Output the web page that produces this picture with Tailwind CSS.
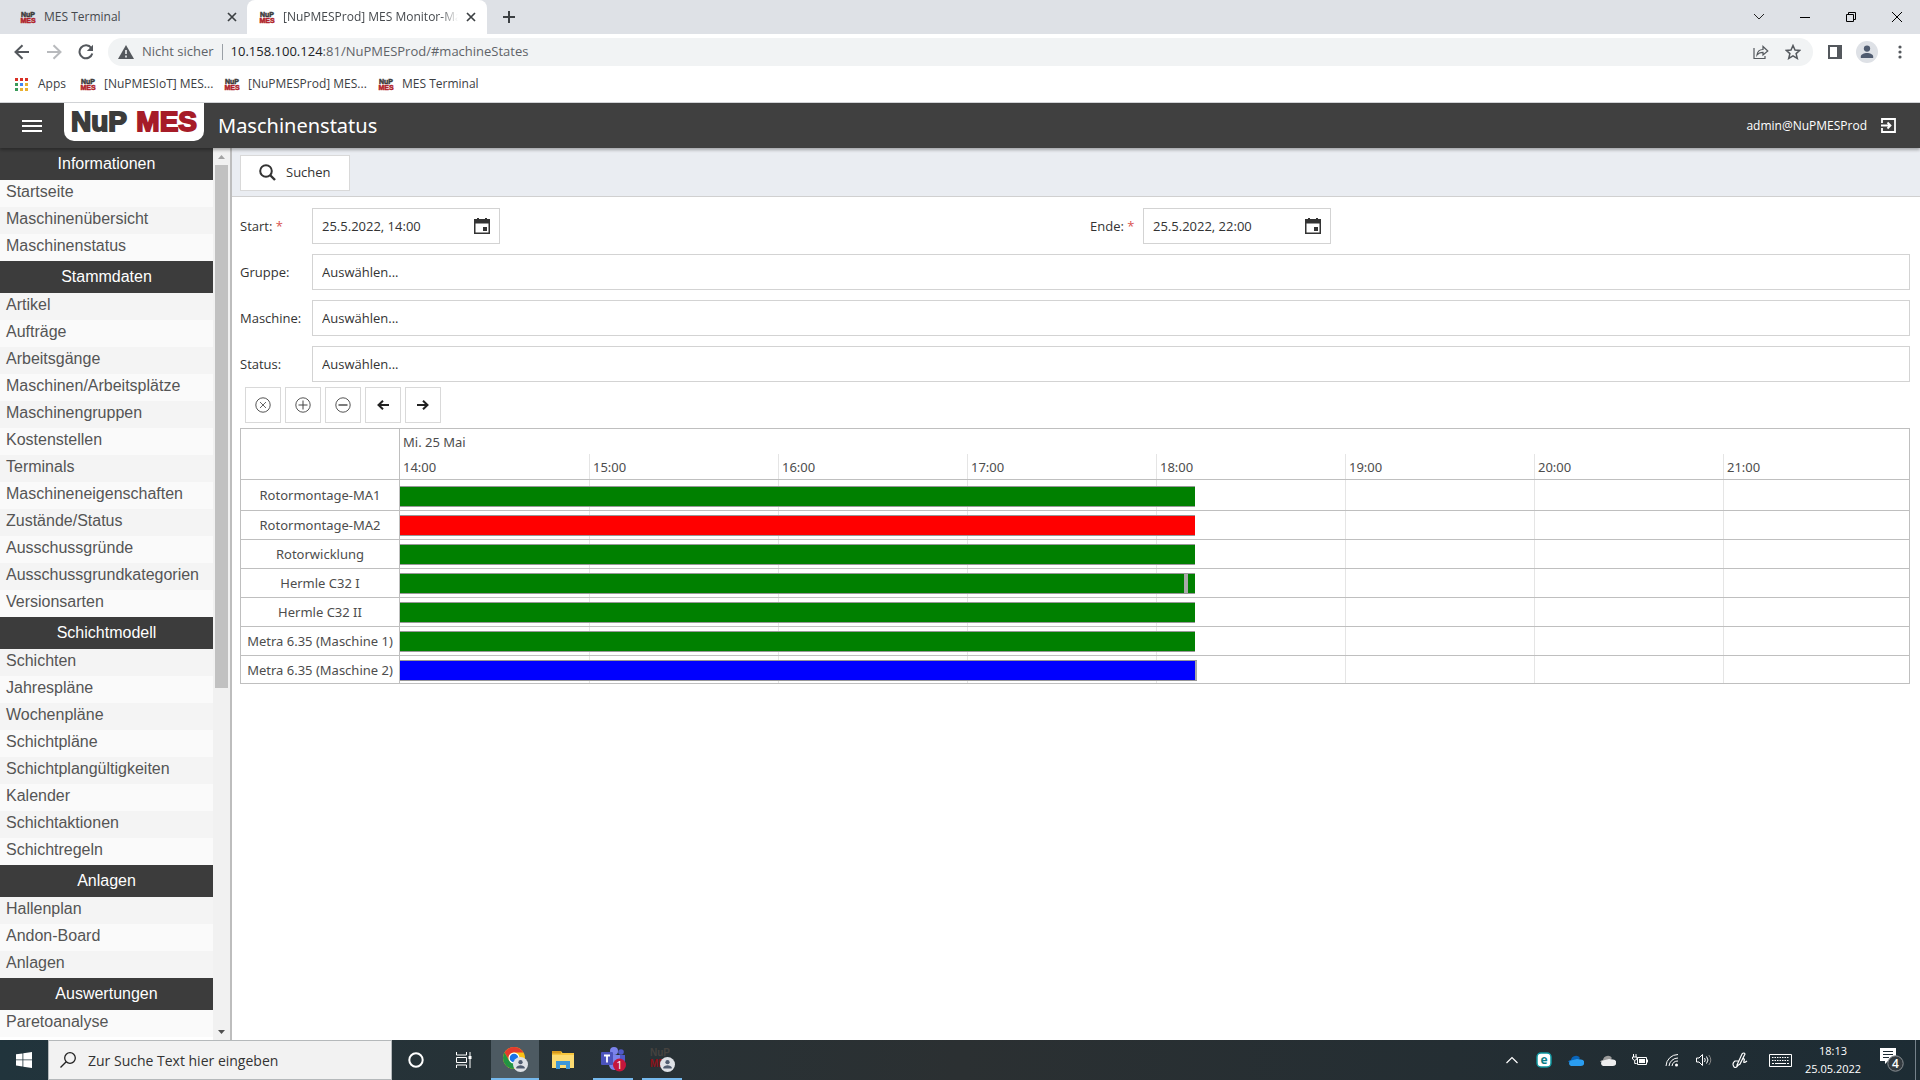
<!DOCTYPE html>
<html lang="de">
<head>
    <meta charset="UTF-8">
    <meta name="viewport" content="width=device-width, initial-scale=1.0">
    <title>[NuPMESProd] MES Monitor-Maschinenstatus</title>
    <script src="https://cdn.jsdelivr.net/npm/@tailwindcss/browser@4"></script>
</head>
<body class="h-screen flex flex-col overflow-hidden bg-white font-['Open_Sans',sans-serif] text-[13px] text-[#333]">

    <!-- Shared symbols -->
    <svg class="hidden">
        <symbol id="favicon" viewBox="0 0 16 16">
            <text x="8" y="7.5" text-anchor="middle" font-family="Liberation Sans" font-weight="700" font-size="7" fill="#3c3c3b" stroke="#3c3c3b" stroke-width=".5">NuP</text>
            <text x="8" y="14" text-anchor="middle" font-family="Liberation Sans" font-weight="700" font-size="7" fill="#b01f2b" stroke="#b01f2b" stroke-width=".5">MES</text>
        </symbol>
        <symbol id="close" viewBox="0 0 10 10"><path d="M1 1l8 8M9 1L1 9" stroke="#3c4043" stroke-width="1.7" fill="none"/></symbol>
        <symbol id="calendar" viewBox="0 0 16 16"><path d="M0 1h16v15H0zM1.5 5.500v9h13v-9z" fill="#333" fill-rule="evenodd"/><path d="M3 0h2v2H3zM11 0h2v2h-2zM9 9h4v4H9z" fill="#333"/></symbol>
        <symbol id="person" viewBox="0 0 16 16"><circle cx="8" cy="8" r="8" fill="#dee1e6"/><circle cx="8" cy="5.500" r="2.300" fill="#505c70"/><path d="M3.500 12.300v-1c0-1.500 2.500-2.500 4.500-2.500s4.500 1 4.500 2.500v1z" fill="#505c70"/></symbol>
    </svg>

    <!-- Browser tabs -->
    <div class="h-[34px] shrink-0 flex items-stretch bg-[#dee1e6] text-[12px] text-[#45494d]">
        <div class="w-[247px] flex items-center pl-5 pr-[10px]">
            <svg class="w-4 h-4 mr-2"><use href="#favicon"/></svg>
            <span class="flex-1">MES Terminal</span>
            <button aria-label="Tab schließen"><svg class="w-[10px] h-[10px]"><use href="#close"/></svg></button>
        </div>
        <div class="w-[240px] flex items-center pl-3 pr-[11px] bg-white rounded-t-lg">
            <svg class="w-4 h-4 mr-2 shrink-0"><use href="#favicon"/></svg>
            <span class="w-[176px] mr-2 overflow-hidden whitespace-nowrap mask-r-from-90%">[NuPMESProd] MES Monitor-Maschinenstatus</span>
            <button aria-label="Tab schließen"><svg class="w-[10px] h-[10px]"><use href="#close"/></svg></button>
        </div>
        <button class="ml-4 flex items-center" aria-label="Neuer Tab"><svg class="w-3 h-3" viewBox="0 0 12 12"><path d="M6 0v12M0 6h12" stroke="#3c4043" stroke-width="2"/></svg></button>
        <div class="ml-auto flex items-center">
            <button class="w-[46px] h-7 flex items-center justify-center" aria-label="Tabs suchen"><svg class="w-3 h-3" viewBox="0 0 12 12"><path d="M1 3l5 5 5-5" stroke="#222" fill="none"/></svg></button>
            <button class="w-[46px] h-7 flex items-center justify-center" aria-label="Minimieren"><svg class="w-[10px] h-[10px]" viewBox="0 0 10 10"><path d="M0 5.500h10" stroke="#000"/></svg></button>
            <button class="w-[46px] h-7 flex items-center justify-center" aria-label="Verkleinern"><svg class="w-[10px] h-[10px]" viewBox="0 0 10 10"><path d="M.5 2.500h7v7h-7zM2.500 2.500v-2h7v7h-2" stroke="#000" fill="none"/></svg></button>
            <button class="w-[46px] h-7 flex items-center justify-center" aria-label="Schließen"><svg class="w-[10px] h-[10px]" viewBox="0 0 10 10"><path d="M0 0l10 10M10 0L0 10" stroke="#000"/></svg></button>
        </div>
    </div>

    <!-- Address bar -->
    <div class="h-9 shrink-0 flex items-center pl-[14px] pr-[18px]">
        <button aria-label="Zurück"><svg class="w-[15px] h-4" viewBox="0 0 15 16"><path d="M15 8H2M8.500 1.200L1.500 8l7 6.800" stroke="#54585d" stroke-width="2" fill="none"/></svg></button>
        <button class="ml-[18px]" aria-label="Vorwärts"><svg class="w-[15px] h-4" viewBox="0 0 15 16"><path d="M0 8h13M6.500 1.200l7 6.800-7 6.800" stroke="#b8babd" stroke-width="2" fill="none"/></svg></button>
        <button class="ml-4" aria-label="Neu laden"><svg class="w-4 h-4" viewBox="0 0 16 16"><path d="M13.300 4A6.500 6.500 0 1 0 14.300 9.500" stroke="#54585d" stroke-width="2" fill="none"/><path d="M15 .8v6.200H8.800z" fill="#54585d"/></svg></button>
        <div class="ml-[14px] flex-1 h-7 rounded-full bg-[#f1f3f4] flex items-center pl-[10px] pr-3 text-[13px] text-[#5f6368]">
            <svg class="w-4 h-[14px]" viewBox="0 0 16 14"><path d="M8 0l8 14H0z" fill="#54585d"/><path d="M8 5v4M8 10.500v2" stroke="#f1f3f4" stroke-width="1.600"/></svg>
            <span class="ml-2">Nicht sicher</span>
            <span class="mx-2 w-px h-4 bg-[#9aa0a6]"></span>
            <span class="flex-1"><span class="text-[#202124]">10.158.100.124</span>:81/NuPMESProd/#machineStates</span>
            <button aria-label="Teilen"><svg class="w-4 h-4" viewBox="0 0 16 16"><path d="M1 4v10.500h11V12M4 11c.5-4 3-5.500 6-5.500V2.500L14.800 7 10 11V8.300C7.500 8.300 5.500 9 4 11z" stroke="#54585d" stroke-width="1.200" fill="none"/></svg></button>
            <button class="ml-4" aria-label="Lesezeichen"><svg class="w-4 h-4" viewBox="0 0 16 16"><path d="M8 1.500l2 4.500 4.800.400-3.700 3.200 1.200 4.800L8 11.900l-4.300 2.500 1.200-4.800L1.200 6.400 6 6z" stroke="#54585d" stroke-width="1.500" fill="none"/></svg></button>
        </div>
        <button class="ml-[15px]" aria-label="Seitenleiste"><svg class="w-[14px] h-[14px]" viewBox="0 0 14 14"><path d="M1 1h12v12H1z" stroke="#54585d" stroke-width="2" fill="none"/><path d="M9 1h4v12H9z" fill="#54585d"/></svg></button>
        <button class="ml-[14px]" aria-label="Profil"><svg class="w-[22px] h-[22px]"><use href="#person"/></svg></button>
        <button class="ml-5" aria-label="Menü"><svg class="w-1 h-[14px]" viewBox="0 0 4 14"><path d="M2 2h0M2 7h0M2 12h0" stroke="#54585d" stroke-width="3.200" stroke-linecap="round"/></svg></button>
    </div>

    <!-- Bookmarks -->
    <div class="h-[33px] shrink-0 flex items-center border-b border-[#d5d7da] pl-[15px] pb-1 text-[12px] text-[#3c4043]">
        <a href="#" class="flex items-center"><svg class="w-[13px] h-[13px] mr-[10px]" viewBox="0 0 13 13"><path d="M0 0h3v3H0zM5 0h3v3H5zM10 0h3v3h-3z" fill="#d93025"/><path d="M0 5h3v3H0zM0 10h3v3H0z" fill="#3a9b5a"/><path d="M5 5h3v3H5z" fill="#4285f4"/><path d="M10 5h3v3h-3zM5 10h3v3H5zM10 10h3v3h-3z" fill="#eab030"/></svg>Apps</a>
        <a href="#" class="ml-[14px] flex items-center"><svg class="w-4 h-4 mr-2"><use href="#favicon"/></svg><span class="w-[106px] whitespace-nowrap">[NuPMESIoT] MES...</span></a>
        <a href="#" class="ml-[14px] flex items-center"><svg class="w-4 h-4 mr-2"><use href="#favicon"/></svg><span class="w-[116px] whitespace-nowrap">[NuPMESProd] MES...</span></a>
        <a href="#" class="ml-[14px] flex items-center"><svg class="w-4 h-4 mr-2"><use href="#favicon"/></svg>MES Terminal</a>
    </div>

    <!-- App header -->
    <header class="relative z-10 h-[45px] shrink-0 flex items-center bg-[#404040] text-white shadow-[0_2px_3px_rgba(0,0,0,0.3)]">
        <button class="ml-[22px]" aria-label="Navigation"><svg class="w-5 h-3" viewBox="0 0 20 12"><path d="M0 1h20M0 6h20M0 11h20" stroke="#fff" stroke-width="2"/></svg></button>
        <div class="ml-[22px] self-start w-[140px] h-[38px] bg-white rounded-b-[10px]">
            <svg class="w-[140px] h-[38px]" viewBox="0 0 140 38">
                <text x="7" y="28" font-family="Liberation Sans" font-weight="700" font-size="28" fill="#3c3c3b" stroke="#3c3c3b" stroke-width="1.8">NuP</text>
                <text x="133" y="28" text-anchor="end" font-family="Liberation Sans" font-weight="700" font-size="28" fill="#a61c28" stroke="#a61c28" stroke-width="1.8">MES</text>
            </svg>
        </div>
        <h1 class="ml-[14px] font-['Noto_Sans',sans-serif] text-[20px]">Maschinenstatus</h1>
        <span class="ml-auto text-[12px]">admin@NuPMESProd</span>
        <button class="ml-[14px] mr-6" aria-label="Abmelden"><svg class="w-[15px] h-[15px]" viewBox="0 0 15 15"><path d="M1 5V1h13v13H1v-4M0 7.500h9M6.500 4.500l3 3-3 3" stroke="#fff" stroke-width="1.800" fill="none"/></svg></button>
    </header>

    <div class="flex-1 min-h-0 flex">
        <!-- Sidebar -->
        <nav id="sidebar" class="w-[213px] shrink-0 overflow-hidden font-['Liberation_Sans',sans-serif] text-[16px] text-[#555]"></nav>
        <div class="w-[17px] shrink-0 flex flex-col items-center bg-[#f1f1f1]">
            <svg class="w-[17px] h-[17px] shrink-0" viewBox="0 0 17 17"><path d="M5 11h7L8.500 7z" fill="#a3a3a3"/></svg>
            <div class="w-[13px] h-[58.6%] bg-[#c1c1c1]"></div>
            <svg class="mt-auto w-[17px] h-[17px] shrink-0" viewBox="0 0 17 17"><path d="M5 7h7l-3.500 4z" fill="#505050"/></svg>
        </div>
        <div class="w-[2px] shrink-0 bg-[#bdbdbd]"></div>

        <!-- Content -->
        <main class="flex-1 min-w-0 flex flex-col">
            <div class="h-[49px] shrink-0 flex items-center bg-[#eaedf2] border-b border-[#d0d0d0] pl-2 pt-px">
                <button class="w-[110px] h-9 flex items-center pl-[18px] bg-white border border-[#d9d9d9]">
                    <svg class="w-[17px] h-[17px] mr-[10px]" viewBox="0 0 17 17"><circle cx="7" cy="7" r="5.800" stroke="#333" stroke-width="2" fill="none"/><path d="M11 11l5 5" stroke="#333" stroke-width="2.400"/></svg>
                    <span class="pt-px">Suchen</span>
                </button>
            </div>

            <form class="pt-[11px] pl-2 pr-[10px] flex flex-col gap-[10px]">
                <div class="flex">
                    <div class="w-1/2 flex items-center">
                        <label for="start" class="w-[72px] pt-px">Start: <span class="text-[#d9534f]">*</span></label>
                        <div class="w-[188px] h-9 flex items-center border border-[#d3d3d3] px-[9px]">
                            <input id="start" type="text" value="25.5.2022, 14:00" class="flex-1 min-w-0 pt-px outline-none">
                            <button type="button" aria-label="Startdatum wählen"><svg class="w-4 h-4"><use href="#calendar"/></svg></button>
                        </div>
                    </div>
                    <div class="w-1/2 flex items-center pl-[15px]">
                        <label for="ende" class="w-[53px] pt-px">Ende: <span class="text-[#d9534f]">*</span></label>
                        <div class="w-[188px] h-9 flex items-center border border-[#d3d3d3] px-[9px]">
                            <input id="ende" type="text" value="25.5.2022, 22:00" class="flex-1 min-w-0 pt-px outline-none">
                            <button type="button" aria-label="Enddatum wählen"><svg class="w-4 h-4"><use href="#calendar"/></svg></button>
                        </div>
                    </div>
                </div>
                <div class="flex items-center">
                    <label for="gruppe" class="w-[72px] pt-px">Gruppe:</label>
                    <select id="gruppe" class="flex-1 h-9 appearance-none border border-[#d3d3d3] px-[9px] pt-px"><option>Auswählen...</option></select>
                </div>
                <div class="flex items-center">
                    <label for="maschine" class="w-[72px] pt-px">Maschine:</label>
                    <select id="maschine" class="flex-1 h-9 appearance-none border border-[#d3d3d3] px-[9px] pt-px"><option>Auswählen...</option></select>
                </div>
                <div class="flex items-center">
                    <label for="status" class="w-[72px] pt-px">Status:</label>
                    <select id="status" class="flex-1 h-9 appearance-none border border-[#d3d3d3] px-[9px] pt-px"><option>Auswählen...</option></select>
                </div>
            </form>

            <div class="mt-[5px] pl-[13px] flex gap-1">
                <button class="w-9 h-9 flex items-center justify-center border border-[#d9d9d9]" aria-label="Zurücksetzen"><svg class="w-4 h-4" viewBox="0 0 16 16"><circle cx="8" cy="8" r="7.200" stroke="#555" fill="none"/><path d="M5 5l6 6M11 5l-6 6" stroke="#666"/></svg></button>
                <button class="w-9 h-9 flex items-center justify-center border border-[#d9d9d9]" aria-label="Vergrößern"><svg class="w-4 h-4" viewBox="0 0 16 16"><circle cx="8" cy="8" r="7.200" stroke="#555" fill="none"/><path d="M8 3.500v9M3.500 8h9" stroke="#444"/></svg></button>
                <button class="w-9 h-9 flex items-center justify-center border border-[#d9d9d9]" aria-label="Verkleinern"><svg class="w-4 h-4" viewBox="0 0 16 16"><circle cx="8" cy="8" r="7.200" stroke="#555" fill="none"/><path d="M3.500 8h9" stroke="#333" stroke-width="1.300"/></svg></button>
                <button class="w-9 h-9 flex items-center justify-center border border-[#d9d9d9]" aria-label="Nach links"><svg class="w-3 h-[10px]" viewBox="0 0 12 10"><path d="M12 5H2M6 .7L1.500 5 6 9.300" stroke="#222" stroke-width="2" fill="none"/></svg></button>
                <button class="w-9 h-9 flex items-center justify-center border border-[#d9d9d9]" aria-label="Nach rechts"><svg class="w-3 h-[10px]" viewBox="0 0 12 10"><path d="M0 5h10M6 .7L10.500 5 6 9.300" stroke="#222" stroke-width="2" fill="none"/></svg></button>
            </div>

            <!-- Timeline -->
            <div class="mt-[5px] ml-2 mr-[10px] border border-[#bfbfbf] font-['Noto_Sans',sans-serif] text-[#4d4d4d]">
                <div class="flex h-[51px] border-b border-[#bfbfbf]">
                    <div class="w-[159px] shrink-0 border-r border-[#bfbfbf]"></div>
                    <div class="flex-1 min-w-0 flex flex-col overflow-hidden">
                        <div class="h-[25px] pl-[3px] leading-[26px]">Mi. 25 Mai</div>
                        <div id="hours" class="flex-1 flex leading-[26px]"></div>
                    </div>
                </div>
                <div id="rows"></div>
            </div>
        </main>
    </div>

    <!-- Taskbar -->
    <footer class="h-10 shrink-0 flex items-stretch bg-linear-to-r from-[#21343c] via-[#2b3032] to-[#1d2c34] text-white">
        <button class="w-12 flex items-center justify-center" aria-label="Start"><svg class="w-4 h-4" viewBox="0 0 16 16"><path d="M0 2.300l6.500-.9v6.100H0zM7.300 1.300L16 0v7.500H7.300zM0 8.300h6.500v6.200L0 13.600zM7.300 8.300H16V16l-8.700-1.300z" fill="#fff"/></svg></button>
        <div class="w-[344px] flex items-center border border-[#b5b9bb] bg-[#f2f2f2] pl-[11px]">
            <svg class="w-4 h-4 mr-3" viewBox="0 0 16 16"><circle cx="10" cy="6" r="5.300" stroke="#222" stroke-width="1.300" fill="none"/><path d="M6.200 9.800L.5 15.500" stroke="#222" stroke-width="1.300"/></svg>
            <input type="text" aria-label="Suche" placeholder="Zur Suche Text hier eingeben" class="flex-1 min-w-0 text-[14px] outline-none placeholder:text-[#333]">
        </div>
        <button class="w-12 flex items-center justify-center" aria-label="Cortana"><svg class="w-4 h-4" viewBox="0 0 16 16"><circle cx="8" cy="8" r="6.700" stroke="#fff" stroke-width="2" fill="none"/></svg></button>
        <button class="w-12 flex items-center justify-center" aria-label="Taskansicht"><svg class="w-4 h-4" viewBox="0 0 16 16"><path d="M.5 0v3h10V0M.5 16v-3h10v3M.5 5.500h10v5H.500zM14 0v16" stroke="#fff" fill="none"/><path d="M12.500 4h3v3h-3z" fill="#fff"/></svg></button>
        <button class="w-12 ml-[3px] flex items-center justify-center bg-[#4d5a62] border-b-2 border-[#76b9ed]" aria-label="Chrome">
            <svg class="w-7 h-7" viewBox="0 0 28 28"><circle cx="13" cy="13" r="11" fill="#fbc116"/><path d="M3.500 7.500A11 11 0 0 1 22.500 7.500H13a5.500 5.500 0 0 0-4.800 8.200z" fill="#e33b2e"/><path d="M3.500 7.500A11 11 0 0 0 12.500 24l5-8.300H8.200z" fill="#229342"/><circle cx="13" cy="13" r="5.500" fill="#fff"/><circle cx="13" cy="13" r="4.300" fill="#1a73e8"/><use href="#person" x="12" y="12" width="15" height="15"/></svg>
        </button>
        <button class="w-12 flex items-center justify-center" aria-label="Explorer"><svg class="w-[22px] h-[18px]" viewBox="0 0 22 18"><path d="M0 0h9l1.500 2H22v15H0z" fill="#f8c63d"/><path d="M0 0h9v2.500H0z" fill="#d99a1c"/><path d="M0 4h22v13H0z" fill="#fddb71"/><path d="M4 18V10h14v8h-4v-4H8v4z" fill="#3d97d8"/></svg></button>
        <button class="w-10 ml-[6px] flex items-center justify-center border-b-2 border-[#76b9ed]" aria-label="Teams">
            <svg class="w-7 h-7" viewBox="0 0 28 28"><circle cx="15" cy="6" r="4" fill="#7b83eb"/><circle cx="22" cy="7" r="2.800" fill="#5059c9"/><path d="M18 10h8v7c0 3-2 5-5 5h-3z" fill="#5059c9"/><path d="M10 10h11v9c0 4-3 6-6 6s-5-3-5-6z" fill="#7b83eb"/><rect x="2" y="7" width="12" height="13" rx="1" fill="#4b53bc"/><path d="M5 10.500h6M8 10.500v7" stroke="#fff" stroke-width="1.800"/><circle cx="20.500" cy="20" r="6.500" fill="#c4173c"/><text x="20.500" y="24" text-anchor="middle" font-family="Open Sans" font-size="11" fill="#fff">1</text></svg>
        </button>
        <button class="w-10 ml-[9px] flex items-center justify-center border-b-2 border-[#76b9ed]" aria-label="MES Terminal">
            <svg class="w-7 h-7" viewBox="0 0 28 28"><text x="2" y="11" font-family="Liberation Sans" font-weight="700" font-size="10" fill="#45423f">NuP</text><text x="2" y="22" font-family="Liberation Sans" font-weight="700" font-size="10" fill="#8d1119">MES</text><use href="#person" x="12" y="12" width="15" height="15"/></svg>
        </button>

        <div class="ml-auto flex items-center">
            <button class="w-8 flex justify-center" aria-label="Ausgeblendete Symbole"><svg class="w-3 h-2" viewBox="0 0 12 8"><path d="M.5 7L6 1.500 11.500 7" stroke="#fff" stroke-width="1.200" fill="none"/></svg></button>
            <button class="w-8 flex justify-center" aria-label="ESET"><svg class="w-4 h-4" viewBox="0 0 16 16"><rect x="1" y="1" width="14" height="14" rx="4" fill="#fff" stroke="#0e97a0" stroke-width="1.500"/><text x="8" y="12" text-anchor="middle" font-family="Open Sans" font-weight="700" font-size="12" fill="#0a7d86">e</text></svg></button>
            <button class="w-8 flex justify-center" aria-label="OneDrive"><svg class="w-4 h-[11px]" viewBox="0 0 16 11"><path d="M3 5a5 5 0 0 1 9-2l-4 4H0a3 3 0 0 1 3-2z" fill="#0a64b8"/><path d="M3 11a2.900 2.900 0 0 1 0-5.500L9 4l4 .5A3.200 3.200 0 0 1 13 11z" fill="#2a9df0"/></svg></button>
            <button class="w-8 flex justify-center" aria-label="OneDrive privat"><svg class="w-4 h-[11px]" viewBox="0 0 16 11"><path d="M3 5a5 5 0 0 1 9-2l-4 4H0a3 3 0 0 1 3-2z" fill="#9b9b9b"/><path d="M3 11a2.900 2.900 0 0 1 0-5.500L9 4l4 .5A3.200 3.200 0 0 1 13 11z" fill="#eee"/></svg></button>
            <button class="w-8 flex justify-center" aria-label="Akku"><svg class="w-4 h-3" viewBox="0 0 16 12"><path d="M5.500 3.500h9v7h-9zM15.500 5.500v3M1.500 0v3M4 0v3M.5 3h4.500v2L2.700 6.500.5 5zM2.700 6.500v3h2" stroke="#fff" fill="none"/><path d="M7 5h6v4H7z" fill="#fff"/></svg></button>
            <button class="w-8 flex justify-center" aria-label="WLAN"><svg class="w-[14px] h-[14px]" viewBox="0 0 14 14"><path d="M1 13A12 12 0 0 1 13 1.500M4 13a9 9 0 0 1 9-8M7 13a6 6 0 0 1 6-5" stroke="#fff" fill="none"/><circle cx="11.500" cy="12" r="1.500" fill="#fff"/></svg></button>
            <button class="w-8 flex justify-center" aria-label="Lautstärke"><svg class="w-4 h-[14px]" viewBox="0 0 16 14"><path d="M.5 5H3l3.500-3.500v11L3 9H.5zM8.500 5q1.500 2 0 4M10.500 3.500q3 3.500 0 7" stroke="#fff" fill="none"/><path d="M12.800 2q4 5 0 10" stroke="#888" fill="none"/></svg></button>
            <button class="w-10 flex justify-center" aria-label="Stift"><svg class="w-4 h-4" viewBox="0 0 16 16"><path d="M5 13L10 2q2-2 3 0L8 12l-3 2zM7 9H3q-3 2-1.500 5t4 0M11 7q2-1 1 2t3 0" stroke="#fff" stroke-width="1.200" fill="none"/></svg></button>
            <button class="w-10 flex justify-center" aria-label="Bildschirmtastatur"><svg class="w-[23px] h-[13px]" viewBox="0 0 23 13"><path d="M.5.500h22v12H.500z" stroke="#fff" fill="none"/><path d="M3 3.500h17M3 6.500h17" stroke="#fff" stroke-dasharray="1.500 1"/><path d="M3 9.500h2M6 9.500h11M18 9.500h2" stroke="#fff"/></svg></button>
            <div class="w-[66px] text-center text-[11px] leading-[18px]">18:13<br>25.05.2022</div>
            <button class="w-11 pl-2 flex justify-center" aria-label="Benachrichtigungen"><svg class="w-6 h-6" viewBox="0 0 24 24"><path d="M0 0h16v13H8l-3 3v-3H0z" fill="#fff"/><path d="M3 3.500h10M3 6.500h10M3 9.500h6" stroke="#1d2c34"/><circle cx="15.500" cy="15.500" r="7.700" fill="#333a3f" stroke="#8b9195"/><text x="15.500" y="20" text-anchor="middle" font-family="Open Sans" font-weight="600" font-size="12" fill="#fff">4</text></svg></button>
            <div class="ml-[5px] mr-1 w-px h-10 bg-[#75818a]"></div>
        </div>
    </footer>

    <script>
        const menu = [
            ['Informationen', ['Startseite', 'Maschinenübersicht', 'Maschinenstatus']],
            ['Stammdaten', ['Artikel', 'Aufträge', 'Arbeitsgänge', 'Maschinen/Arbeitsplätze', 'Maschinengruppen', 'Kostenstellen', 'Terminals', 'Maschineneigenschaften', 'Zustände/Status', 'Ausschussgründe', 'Ausschussgrundkategorien', 'Versionsarten']],
            ['Schichtmodell', ['Schichten', 'Jahrespläne', 'Wochenpläne', 'Schichtpläne', 'Schichtplangültigkeiten', 'Kalender', 'Schichtaktionen', 'Schichtregeln']],
            ['Anlagen', ['Hallenplan', 'Andon-Board', 'Anlagen']],
            ['Auswertungen', ['Paretoanalyse']]
        ];
        let count = 0;
        let nav = '';
        menu.forEach(([title, items]) => {
            nav += `<h2 class="h-8 bg-[#3c3c3c] text-white text-center leading-[31px]">${title}</h2>`;
            items.forEach(item => {
                const bg = count++ % 2 ? 'bg-[#f4f4f4]' : 'bg-[#fafafa]';
                nav += `<a href="#" class="block h-[27px] pl-[6px] leading-[24px] ${bg}">${item}</a>`;
            });
        });
        document.getElementById('sidebar').innerHTML = nav;

        // One column per hour
        const hours = ['14:00', '15:00', '16:00', '17:00', '18:00', '19:00', '20:00', '21:00'];
        document.getElementById('hours').innerHTML = hours.map((h, i) =>
            `<div class="w-[189px] shrink-0 pl-[3px] ${i ? 'border-l border-[#e5e5e5]' : ''}">${h}</div>`).join('');

        const grid = hours.map((h, i) => `<div class="w-[189px] shrink-0 ${i ? 'border-l border-[#e5e5e5]' : ''}"></div>`).join('');
        const green = 'bg-[#008000]';
        const gray = 'bg-[#a9a9a9]';
        // Segments: colour and width in pixels
        const machines = [
            ['Rotormontage-MA1', [[green, 795]]],
            ['Rotormontage-MA2', [['bg-[#ff0000]', 795]]],
            ['Rotorwicklung', [[green, 795]]],
            ['Hermle C32 I', [[green, 784], [gray, 4], [green, 7]]],
            ['Hermle C32 II', [[green, 795]]],
            ['Metra 6.35 (Maschine 1)', [[green, 795]]],
            ['Metra 6.35 (Maschine 2)', [['bg-[#0000ff]', 795], [gray, 2]]]
        ];
        document.getElementById('rows').innerHTML = machines.map(([name, bars], i) => `
            <div class="flex ${i ? 'h-[29px]' : 'h-[31px]'} border-b border-[#bfbfbf] last:h-[27px] last:border-b-0">
                <div class="w-[159px] shrink-0 border-r border-[#bfbfbf] pt-[2px] flex items-center justify-center whitespace-nowrap">${name}</div>
                <div class="relative flex-1 min-w-0 flex overflow-hidden">
                    ${grid}
                    <div class="absolute left-0 ${i ? 'top-1' : 'top-[6px]'} h-[21px] flex border-y border-[#999]">
                        ${bars.map(([c, w]) => `<div class="${c}" style="width:${w}px"></div>`).join('')}
                    </div>
                </div>
            </div>`).join('');
    </script>

</body>
</html>
